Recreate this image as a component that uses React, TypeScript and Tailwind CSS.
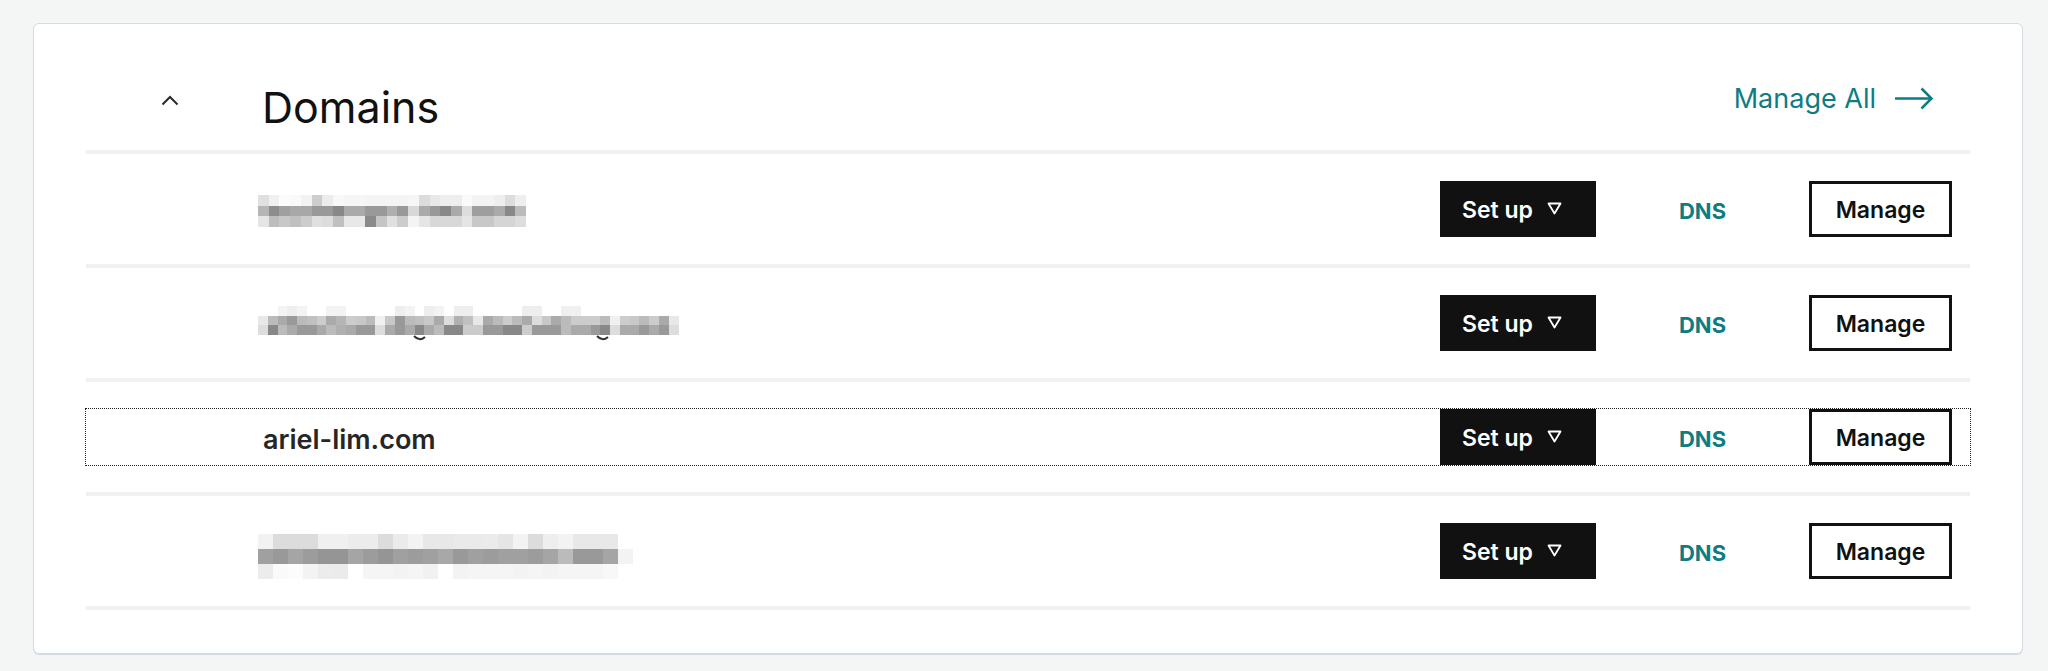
import React from "react";

type Mosaic = {
  w: number;
  h: number;
  rows: number[][];
  shift: string;
  arcs?: number[];
};

const M1: Mosaic = {
  w: 10.72,
  h: 10.7,
  shift: "mt-[4px]",
  rows: [
    [224, 240, 252, 250, 242, 205, 236, 248, 246, 246, 244, 244, 244, 244, 246, 220, 232, 238, 238, 250, 243, 243, 238, 221, 238],
    [181, 141, 160, 168, 168, 153, 153, 136, 170, 170, 153, 153, 176, 153, 216, 170, 153, 136, 170, 221, 158, 158, 170, 136, 187],
    [229, 189, 200, 192, 204, 224, 220, 192, 232, 232, 138, 197, 224, 204, 244, 229, 216, 216, 216, 229, 200, 200, 213, 213, 221],
  ],
};

const M2: Mosaic = {
  w: 9.79,
  h: 9.7,
  shift: "mb-[5px]",
  arcs: [155, 338],
  rows: [
    [255, 255, 243, 238, 243, 255, 255, 243, 243, 255, 255, 255, 255, 255, 238, 243, 255, 238, 243, 255, 238, 238, 255, 255, 255, 255, 255, 238, 238, 255, 255, 240, 240, 255, 255, 255, 255, 255, 255, 255, 255, 255, 255],
    [232, 187, 170, 153, 187, 192, 204, 170, 181, 204, 200, 187, 240, 200, 153, 187, 192, 200, 170, 221, 176, 192, 232, 170, 187, 204, 187, 170, 221, 200, 170, 187, 204, 204, 204, 187, 240, 204, 200, 187, 204, 170, 232],
    [221, 136, 187, 170, 153, 153, 170, 187, 176, 170, 153, 153, 221, 170, 153, 170, 136, 170, 187, 136, 136, 204, 204, 153, 153, 136, 136, 204, 153, 153, 153, 187, 170, 170, 153, 136, 221, 170, 170, 153, 170, 153, 221],
  ],
};

const M4: Mosaic = {
  w: 15,
  h: 15,
  shift: "mt-[10px]",
  rows: [
    [242, 220, 220, 220, 240, 240, 236, 236, 220, 235, 243, 232, 232, 234, 234, 235, 229, 243, 220, 238, 243, 232, 232, 232, 255],
    [160, 153, 165, 156, 149, 149, 165, 156, 149, 160, 156, 160, 168, 153, 160, 156, 160, 160, 156, 165, 187, 153, 153, 165, 243],
    [236, 250, 252, 243, 236, 235, 255, 245, 245, 243, 245, 241, 255, 243, 245, 245, 245, 243, 245, 243, 245, 245, 245, 248, 255],
  ],
};

function Pixelated({ m }: { m: Mosaic }) {
  return (
    <div className={`relative flex flex-col ${m.shift}`}>
      {m.rows.map((row, ri) => (
        <div key={ri} className="flex">
          {row.map((v, ci) => (
            <div
              key={ci}
              style={{ width: m.w, height: m.h, backgroundColor: `rgb(${v},${v},${v})` }}
            />
          ))}
        </div>
      ))}
      {m.arcs?.map((x) => (
        <svg
          key={x}
          className="absolute top-full"
          style={{ left: x }}
          width="13"
          height="7"
          viewBox="0 0 13 7"
        >
          <path d="M1 1 Q6.5 7 12 2" fill="none" stroke="#333" strokeWidth="2" />
        </svg>
      ))}
    </div>
  );
}

function Separator() {
  return <div className="h-[4px] bg-[#f0f1f1]" />;
}

type Row = { name?: string; mosaic?: Mosaic; focused?: boolean };

const rows: Row[] = [{ mosaic: M1 }, { mosaic: M2 }, { name: "ariel-lim.com", focused: true }, { mosaic: M4 }];

function DomainRow({ row }: { row: Row }) {
  return (
    <div className="flex h-[110px] items-center">
      <div
        className={`flex h-[56px] w-full items-center ${
          row.focused ? "outline-1 outline-offset-0 outline-dotted outline-[#222]" : ""
        }`}
      >
        <div className="flex flex-1 items-center pl-[172px]">
          {row.mosaic ? (
            <Pixelated m={row.mosaic} />
          ) : (
            <span className="ml-[5px] mt-[5px] text-[27px] leading-none font-semibold text-[#262626]">{row.name}</span>
          )}
        </div>
        <button className="flex h-[56px] w-[156px] items-center bg-[#111111] pl-[22px] pt-[3px] text-[23px] leading-none font-semibold text-white">
          Set up
          <svg className="ml-[14px] mb-[4px]" width="15" height="13" viewBox="0 0 15 13">
            <polygon points="1.5,1.5 13.5,1.5 7.5,11.5" fill="none" stroke="#fff" strokeWidth="1.8" strokeLinejoin="round" />
          </svg>
        </button>
        <div className="w-[213px] pt-[3px] text-center text-[22px] leading-none font-bold text-[#0e7c83]">DNS</div>
        <button className="flex h-[56px] w-[143px] items-center justify-center border-[3px] border-[#111111] bg-white pt-[3px] text-[23px] leading-none font-semibold text-[#111111]">
          Manage
        </button>
        <div className="w-[18px]" />
      </div>
    </div>
  );
}

export default function App() {
  return (
    <div className="h-[671px] bg-[#f4f6f6] pt-[23px] pl-[33px] pr-[25px] font-['Inter',sans-serif]">
      <div className="rounded-[6px] border border-[#d3dbe1] bg-white px-[52px] pb-[43px] shadow-[0_1px_0_#d3dbe1]">
        <div className="flex h-[126px] items-center pt-[36px]">
          <div className="w-[176px] shrink-0 pl-[75px]">
            <svg className="mb-[10px]" width="18" height="11" viewBox="0 0 18 11">
              <polyline points="1.5,9.5 9,2 16.5,9.5" fill="none" stroke="#2a2a2a" strokeWidth="2" />
            </svg>
          </div>
          <h1 className="mt-[4px] text-[43px] leading-none font-normal text-[#111111]">Domains</h1>
          <a className="mb-[14px] ml-auto mr-[36px] flex items-center text-[27px] leading-none font-normal text-[#0e7c83]">
            Manage All
            <svg className="ml-[18px]" width="40" height="23" viewBox="0 0 40 23">
              <line x1="1" y1="11.5" x2="37" y2="11.5" stroke="#0e7c83" strokeWidth="2.5" />
              <polyline points="27.5,1.5 37.5,11.5 27.5,21.5" fill="none" stroke="#0e7c83" strokeWidth="2.5" />
            </svg>
          </a>
        </div>
        <Separator />
        {rows.map((r, i) => (
          <React.Fragment key={i}>
            <DomainRow row={r} />
            <Separator />
          </React.Fragment>
        ))}
      </div>
    </div>
  );
}
